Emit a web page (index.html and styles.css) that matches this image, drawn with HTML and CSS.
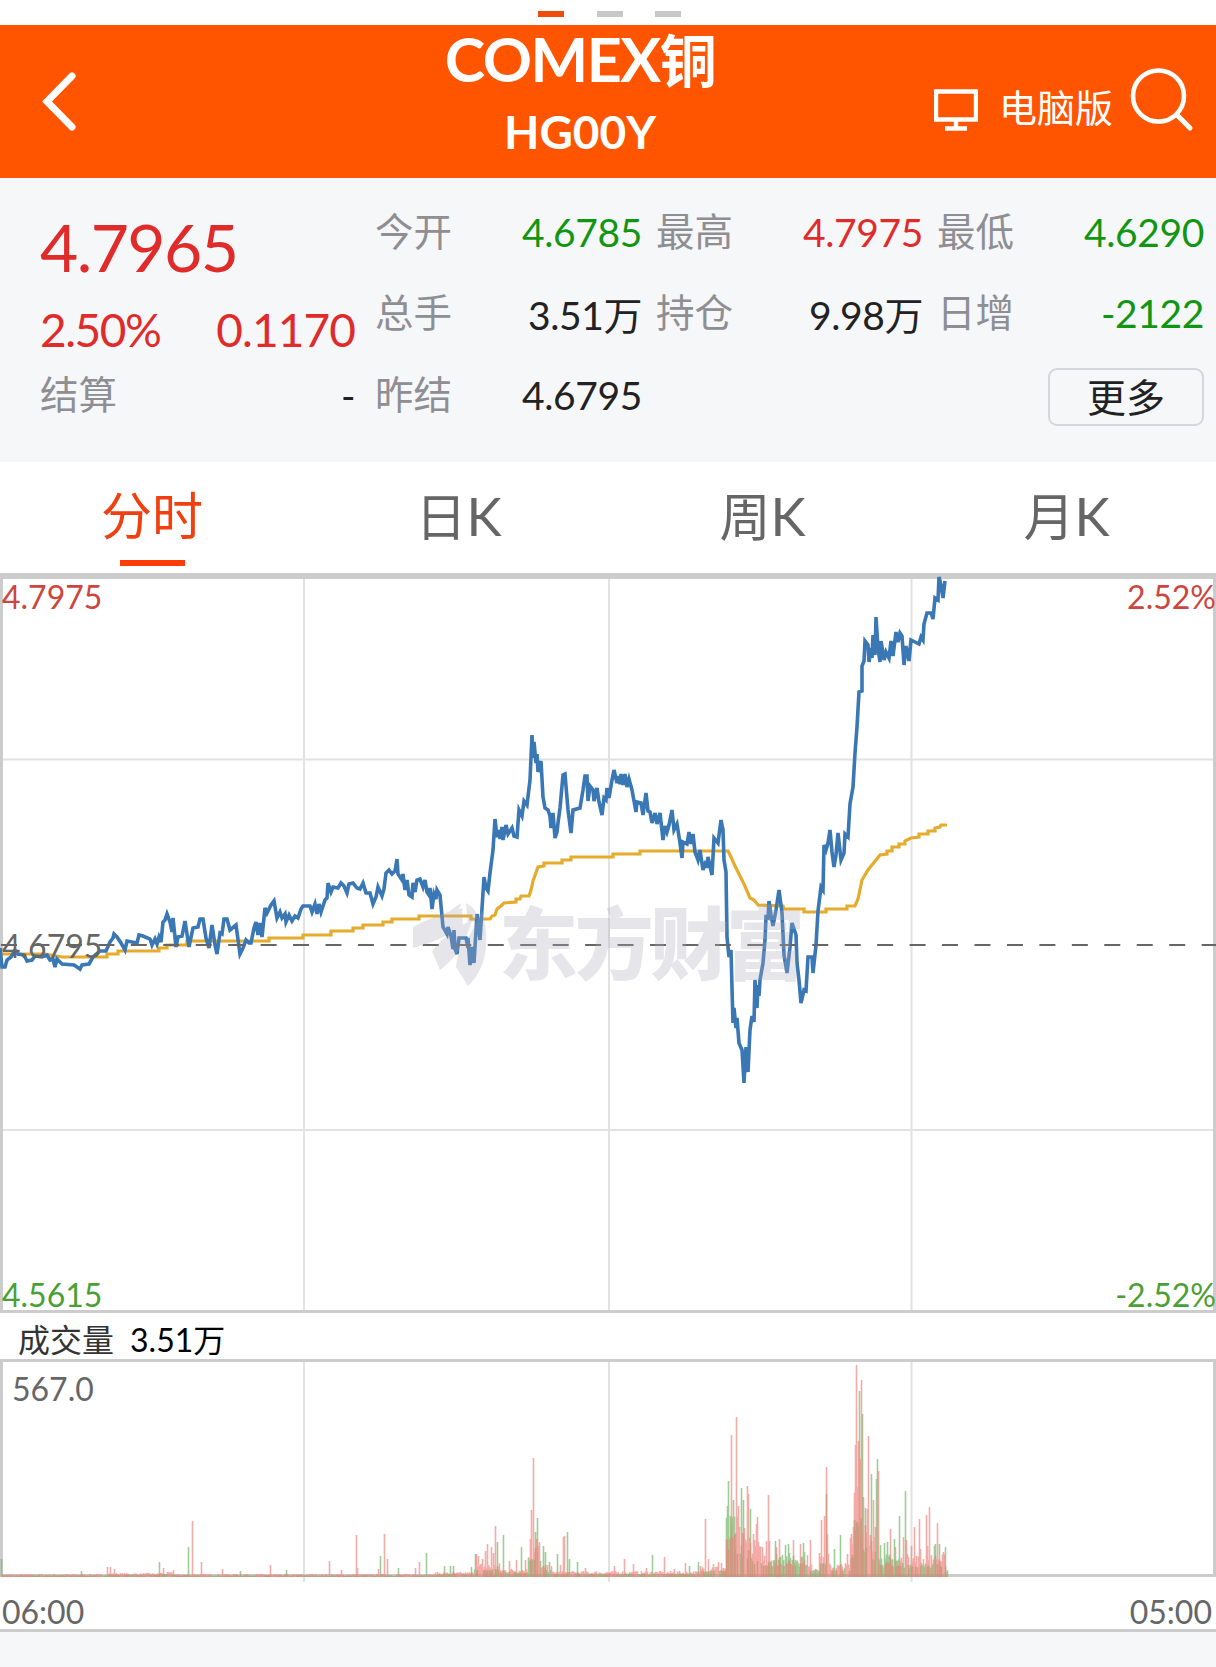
FILE: index.html
```html
<!DOCTYPE html>
<html lang="zh-CN">
<head>
    <meta charset="UTF-8">
    <meta name="viewport" content="width=device-width, initial-scale=1.0">
    <title>COMEX铜 HG00Y</title>
    <link rel="stylesheet" href="styles.css">
</head>
<body>
    <div class="pager">
        <span class="dot active"></span>
        <span class="dot"></span>
        <span class="dot"></span>
    </div>

    <header class="header">
        <a class="back">
            <svg width="36" height="60" viewBox="0 0 36 60"><path d="M31 4L6 29.500l25 25.500" fill="none" stroke="#fff" stroke-width="7" stroke-linecap="round"/></svg>
        </a>
        <div class="title">
            <h1>COMEX<span>铜</span></h1>
            <h2>HG00Y</h2>
        </div>
        <div class="tools">
            <svg class="pc" width="44" height="44" viewBox="0 0 44 44"><path d="M2 2.500h40v28H2zM22 30v9M11 39.500h22" fill="none" stroke="#fff" stroke-width="4.400"/></svg>
            <span>电脑版</span>
            <svg class="search" width="64" height="64" viewBox="0 0 64 64"><path d="M47 47l13 13" stroke="#fff" stroke-width="5" stroke-linecap="round"/><circle cx="28.500" cy="28" r="25.500" fill="none" stroke="#fff" stroke-width="4.600"/></svg>
        </div>
    </header>

    <section class="quote">
        <div class="main">
            <div class="price red">4.7965</div>
            <div class="change red"><span class="percent">2.50%</span><span>0.1170</span></div>
            <div class="item"><label>结算</label><b>-</b></div>
        </div>
        <div class="grid">
            <div class="item"><label>今开</label><b class="green">4.6785</b></div>
            <div class="item"><label>最高</label><b class="red">4.7975</b></div>
            <div class="item"><label>最低</label><b class="green">4.6290</b></div>
            <div class="item"><label>总手</label><b>3.51万</b></div>
            <div class="item"><label>持仓</label><b>9.98万</b></div>
            <div class="item"><label>日增</label><b class="green">-2122</b></div>
            <div class="item"><label>昨结</label><b>4.6795</b></div>
            <div></div>
            <div class="item end"><button class="more">更多</button></div>
        </div>
    </section>

    <nav class="tabs">
        <a class="tab active">分时</a>
        <a class="tab">日<span>K</span></a>
        <a class="tab">周<span>K</span></a>
        <a class="tab">月<span>K</span></a>
    </nav>

    <svg class="chart" width="1216" height="740" viewBox="0 573 1216 740">
        <path class="gridline" d="M304 576V1312M609 576V1312M911.500 576V1312M0 759.500H1216M0 1130H1216"/>
        <path class="frame" d="M0 573H1216V1313H0ZM3 579V1310H1213V579Z"/>
        <polyline class="avg" points="0,954 45,954 62,957 107,957 107,954 118,954 118,951 159,951 159,948 167,948 167,945 187,945 187,941 269,941 269,938 303,938 303,935 331,935 331,931 353,931 353,928 363,928 363,925 383,925 383,922 392,922 392,919 419,919 419,916 471,916 471,919 490,919 492,916 495,915 497,909 501,906 504,903 516,902 516,899 520,899 521,896 529,896 531,890 533,881 538,867 544,866 544,863 562,863 562,860 571,860 571,857 613,857 613,854 640,854 640,851 728,851 731,857 735,866 744,884 750,898 754,900 758,905 783,906 784,909 804,909 804,912 826,912 826,909 847,909 847,906 855,906 858,899 862,880 868,870 880,855 887,854 887,851 892,851 892,847 899,847 899,844 905,844 905,841 911,838 919,837 919,834 928,834 928,831 935,831 935,828 940,827 941,825 947,825"/>
        <polyline class="line" points="0,948 2,967 5,967 7,960 11,957 15,950 18,954 24,955 27,961 32,960 35,956 42,957 47,955 50,960 53,959 55,967 57,959 62,964 74,965 80,969 82,965 89,964 93,957 100,951 106,951 110,942 113,938 114,934 117,937 121,943 125,950 127,941 137,943 139,935 143,936 150,939 152,945 155,939 157,944 159,937 161,942 163,922 165,920 167,914 170,922 172,932 173,918 176,947 178,937 182,936 185,921 189,947 193,928 198,927 200,919 203,919 206,938 209,948 212,925 215,945 217,954 220,933 222,934 224,919 227,919 230,930 236,925 240,954 243,948 246,940 249,943 251,943 254,928 256,922 258,935 260,923 262,937 265,908 267,913 271,905 274,901 277,918 280,912 282,918 285,914 286,922 289,915 292,921 295,916 298,918 301,909 303,906 310,906 312,912 315,904 317,914 319,904 321,912 325,900 327,898 328,883 331,892 333,887 338,888 341,883 344,886 347,893 349,884 353,883 357,888 360,889 363,883 366,893 370,893 373,904 376,897 378,887 382,896 384,889 386,873 389,870 392,874 395,871 397,859 398,874 402,880 403,874 405,890 407,880 409,895 412,897 413,883 415,892 417,880 420,879 423,887 425,880 427,892 429,895 430,888 432,909 434,894 436,899 437,890 440,895 443,927 447,934 448,927 451,936 453,949 454,930 455,949 457,954 459,938 466,938 468,948 468,938 470,965 472,947 474,963 477,914 480,940 484,877 486,888 488,891 490,873 493,850 495,819 497,837 499,830 500,839 502,827 503,840 506,825 508,834 512,828 514,836 517,837 519,810 522,816 524,801 527,805 530,780 532,735 533,758 534,742 536,763 537,754 538,772 541,761 543,797 545,808 548,810 550,816 551,828 553,813 555,838 557,832 558,823 560,808 563,775 565,774 568,810 571,833 573,810 580,808 583,790 585,776 587,776 588,801 590,786 593,790 594,801 597,788 599,802 602,815 604,798 606,800 607,788 609,798 612,780 614,770 617,783 618,776 620,784 621,774 623,785 625,774 627,787 629,779 632,790 636,812 637,802 641,803 643,815 646,793 648,811 650,812 652,823 655,813 657,824 660,813 663,840 665,826 667,832 669,825 672,810 674,830 677,824 680,843 682,858 683,842 687,844 689,832 691,844 693,834 695,852 698,860 700,850 703,870 706,861 707,868 708,857 712,875 714,838 718,843 721,820 723,830 724,860 726,872 727,937 729,957 731,950 732,988 733,1023 734,1008 736,1028 737,1018 739,1043 742,1050 744,1083 746,1047 748,1072 750,1030 752,1016 754,1022 755,980 757,1008 758,985 759,996 760,980 763,963 765,940 766,917 768,918 769,901 771,915 773,926 776,910 779,890 782,913 784,955 787,973 790,947 792,923 796,935 797,963 799,980 801,1003 804,990 806,991 808,957 812,957 813,973 816,945 818,911 821,887 823,890 824,845 826,850 828,843 830,830 832,852 834,867 836,855 838,833 841,860 844,853 845,834 848,837 850,804 853,787 855,753 857,727 859,692 862,691 862,666 864,661 865,641 868,645 869,662 871,648 872,658 873,635 875,655 876,617 878,648 880,662 881,641 884,660 886,652 889,658 891,641 893,656 896,632 898,642 900,633 902,636 904,665 906,646 909,661 911,640 915,642 919,644 921,637 923,640 924,624 927,613 931,613 933,619 935,598 938,600 939,577 941,585 943,598 945,581"/>
        <path class="base" d="M1 945H1216"/>
        <g class="watermark">
            <path d="M413 927Q435 915 462 908L463 926Q440 941 413 948ZM432 951Q448 931 472 920Q463 953 440 970ZM456 967Q458 945 470 935L482 910Q490 940 483 962Q478 977 468 986ZM446 915Q452 908 462 903Q454 918 440 930ZM466 903Q476 908 478 918L468 925Z"/>
            <text x="499" y="974" textLength="306">东方财富</text>
        </g>
        <text class="up" x="2" y="609">4.7975</text>
        <text class="up" x="1216" y="609" text-anchor="end">2.52%</text>
        <text x="2" y="958">4.6795</text>
        <text class="down" x="2" y="1307">4.5615</text>
        <text class="down" x="1216" y="1307" text-anchor="end">-2.52%</text>
    </svg>

    <div class="volume-title"><span>成交量</span><span class="num">3.51万</span></div>

    <svg class="volume" width="1216" height="224" viewBox="0 1359 1216 224">
        <path class="gridline" d="M304 1360V1582M609 1360V1582M911.500 1360V1582"/>
        <path class="frame" d="M0 1359H1216V1577H0ZM3 1362V1574H1213V1362Z"/>
        <path class="bar-green" id="barGreen"/>
        <path class="bar-red" id="barRed"/>
        <text x="12" y="1401">567.0</text>
    </svg>

    <div class="axis"><span>06:00</span><span>05:00</span></div>

    <script>
        // x, bar height
        const up = '107,10 110,10 114,8 163,9 173,7 192,56 201,15 222,8 270,12 329,16 341,7 356,42 357,9 378,8 384,43 387,18 415,9 419,15 476,23 478,21 482,18 485,26 487,33 491,30 493,24 495,51 509,16 516,17 525,17 530,38 531,67 533,119 536,38 539,35 560,12 563,40 564,41 585,9 614,11 624,18 633,13 646,9 664,20 674,8 685,14 705,58 708,18 713,13 718,15 721,14 731,142 734,42 736,160 737,60 738,71 739,50 742,44 744,49 747,91 748,83 753,43 754,37 756,53 757,60 758,35 762,30 766,36 768,82 769,36 776,30 779,38 793,37 800,33 810,37 819,24 821,57 824,61 826,110 827,43 847,23 851,43 853,50 854,70 855,132 856,212 857,90 858,136 861,197 860,118 863,80 867,68 868,141 870,42 873,77 874,40 875,50 878,106 890,48 895,30 903,40 906,37 908,20 911,31 914,50 919,58 920,28 926,62 927,31 929,70 937,54 943,25';
        const down = '1,18 81,6 159,15 188,30 240,6 286,7 380,21 398,9 426,24 444,11 450,11 453,11 471,10 475,23 497,35 503,42 521,30 535,45 537,59 543,31 545,25 549,15 557,23 567,45 569,18 577,15 652,22 689,11 698,15 726,59 727,71 728,96 733,77 741,89 743,77 750,68 775,36 782,22 785,32 788,33 803,34 826,83 834,28 840,42 859,186 862,163 865,69 871,103 876,98 877,118 880,32 884,34 887,35 894,38 899,61 905,86 934,31 935,33 939,33 945,30';
        // usual height of the minutes between the spikes: from x, height
        const levels = [[0, 3], [105, 4], [160, 5], [175, 3], [435, 5], [474, 14], [500, 9], [528, 34], [541, 12], [552, 6], [700, 12], [726, 62], [735, 46], [752, 32], [762, 26], [808, 13], [820, 28], [829, 14], [850, 45], [854, 115], [862, 60], [867, 40], [880, 23], [945, 12]];

        function toPath(list) {
            return list.split(' ').map(p => {
                const [x, h] = p.split(',');
                return `M${x}.500 1577v-${h}`;
            }).join('');
        }

        let red = toPath(up);
        let green = toPath(down);
        let seed = 7;
        for (let x = 1; x < 948; x += 1) {
            seed = (seed * 16807) % 2147483647;
            const r = seed / 2147483647;
            const level = levels.filter(l => l[0] <= x).pop()[1];
            const low = `M${x}.500 1577v-${(level * (0.3 + r * 0.35)).toFixed(1)}`;
            const high = `M${x}.500 1577v-${(level * (0.4 + r * 0.6)).toFixed(1)}`;
            const falling = (x > 725 && x < 736) || (x > 772 && x < 806) || (x > 874 && x < 900);
            if (falling || r < 0.35) {
                green += high;
                if (r > 0.4) red += low;
            } else {
                red += high;
                if (r < 0.6) green += low;
            }
        }
        document.getElementById('barRed').setAttribute('d', red);
        document.getElementById('barGreen').setAttribute('d', green);
    </script>
</body>
</html>
```

FILE: styles.css
```css
* {
    box-sizing: border-box;
}

body {
    margin: 0;
    background: #f6f7f9;
    font-family: Lato, "Noto Sans CJK SC", sans-serif;
    color: #222;
}

svg {
    display: block;
}

.pager {
    height: 25px;
    padding: 11px 0 0 3px;
    display: flex;
    justify-content: center;
    gap: 32.500px;
    background: #fff;
}

.dot {
    width: 26px;
    height: 6px;
    background: #c8c8c8;
}

.dot.active {
    background: #f04a0c;
}

.header {
    height: 153px;
    display: grid;
    grid-template-columns: 300px 560px 1fr;
    background: #ff5500;
    color: #fff;
}

.back {
    padding: 47px 0 0 41px;
}

.title {
    text-align: center;
}

.title h1,
.title h2 {
    margin: 0;
    font-weight: 700;
}

.title h1 {
    font-size: 61px;
    line-height: 67px;
    letter-spacing: -1.500px;
}

.title h1 span {
    font-size: 57px;
}

.title h2 {
    font-size: 46px;
    line-height: 75px;
}

.tools {
    display: flex;
    align-items: flex-start;
    padding-left: 74px;
    font-size: 38px;
    line-height: 50px;
}

.tools .pc {
    margin: 64px 21px 0 0;
}

.tools span {
    margin-top: 57px;
}

.tools .search {
    margin: 43px 0 0 17px;
}

.quote {
    height: 284px;
    display: flex;
    padding: 13px 12px 0 40px;
}

.main {
    width: 315px;
    margin-right: 20px;
}

.price {
    height: 112px;
    line-height: 112px;
    font-size: 66px;
    letter-spacing: -1.600px;
}

.change {
    height: 54px;
    display: flex;
    justify-content: space-between;
    line-height: 54px;
    font-size: 46px;
    letter-spacing: -0.900px;
}

.change .percent {
    letter-spacing: -1.500px;
}

.main .item {
    height: 76px;
}

.grid {
    flex: 1;
    display: grid;
    grid-template-columns: repeat(3, 1fr);
    grid-template-rows: repeat(3, 81.500px);
    column-gap: 14px;
}

.item {
    display: flex;
    justify-content: space-between;
    align-items: center;
    font-size: 39px;
}

.item label {
    color: #8e8e93;
    font-size: 38.500px;
    line-height: 52px;
    margin-top: -2px;
}

.item b {
    font-weight: 400;
    letter-spacing: -0.400px;
}

.item.end {
    justify-content: flex-end;
}

.red {
    color: #e02b2b;
}

.item .green {
    color: #129612;
}

.more {
    width: 156px;
    height: 58px;
    margin-top: 4px;
    padding: 0;
    border: 2px solid #d5d6d9;
    border-radius: 9px;
    background: transparent;
    font: inherit;
    line-height: 48px;
    color: #222;
}

.tabs {
    height: 111px;
    display: flex;
    background: #fff;
}

.tab {
    flex: 1;
    position: relative;
    text-align: center;
    font-size: 51px;
    line-height: 108px;
    color: #666;
}

.tab span {
    margin-right: -5px;
    font-size: 53px;
}

.tab.active {
    color: #f0400f;
}

.tab.active::after {
    content: "";
    position: absolute;
    left: 120px;
    bottom: 7px;
    width: 65px;
    height: 6px;
    background: #ff3d08;
}

.chart,
.volume {
    background: #fff;
    font-size: 32px;
    fill: #666;
}

.gridline {
    fill: none;
    stroke: #e2e2e2;
    stroke-width: 2;
}

.frame {
    fill: #ccc;
    fill-rule: evenodd;
}

.avg {
    fill: none;
    stroke: #e5ab2c;
    stroke-width: 3.200;
}

.line {
    fill: none;
    stroke: #3a77b5;
    stroke-width: 3.600;
}

.base {
    stroke: #666;
    stroke-width: 2;
    stroke-dasharray: 16 16.450;
}

.watermark {
    fill: rgba(172, 170, 186, 0.3);
    font-size: 79px;
    font-weight: 900;
}

.up {
    fill: #cb463e;
}

.down {
    fill: #4a9f35;
}

.volume-title {
    height: 46px;
    padding-left: 18px;
    display: flex;
    gap: 16px;
    background: #fff;
    font-size: 32px;
    line-height: 54px;
    color: #333;
}

.volume-title .num {
    color: #000;
}

.bar-red {
    stroke: #ee7d78;
    stroke-width: 1.600;
    stroke-opacity: 0.65;
}

.bar-green {
    stroke: #74b869;
    stroke-width: 1.600;
    stroke-opacity: 0.7;
}

.axis {
    height: 49px;
    padding: 0 4px 0 2px;
    display: flex;
    justify-content: space-between;
    background: #fff;
    border-bottom: 3px solid #ccc;
    font-size: 32px;
    line-height: 57px;
    color: #666;
}
```
